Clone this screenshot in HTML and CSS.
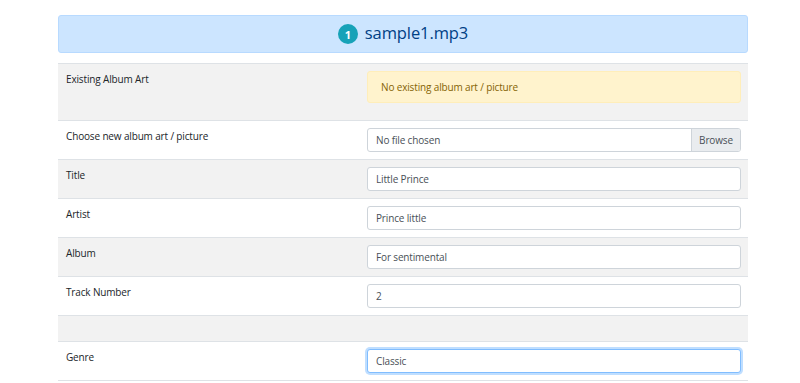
FILE: index.html
```html
<!DOCTYPE html>
<html lang="en">

<head>
    <meta charset="UTF-8">
    <meta name="viewport" content="width=device-width, initial-scale=1.0">
    <title>Edit Tags</title>
    <link rel="stylesheet" href="styles.css">
</head>

<body>
    <div class="container">
        <div class="file-header">
            <span class="badge">1</span>
            <span class="file-name">sample1.mp3</span>
        </div>

        <div class="tag-table">
            <div class="tag-row">
                <div class="tag-label">Existing Album Art</div>
                <div class="tag-field">
                    <div class="alert-warning">No existing album art / picture</div>
                </div>
            </div>
            <div class="tag-row">
                <div class="tag-label">Choose new album art / picture</div>
                <div class="tag-field">
                    <div class="file-input">
                        <span class="file-text">No file chosen</span>
                        <span class="file-browse">Browse</span>
                    </div>
                </div>
            </div>
            <div class="tag-row">
                <div class="tag-label">Title</div>
                <div class="tag-field"><input type="text" value="Little Prince"></div>
            </div>
            <div class="tag-row">
                <div class="tag-label">Artist</div>
                <div class="tag-field"><input type="text" value="Prince little"></div>
            </div>
            <div class="tag-row">
                <div class="tag-label">Album</div>
                <div class="tag-field"><input type="text" value="For sentimental"></div>
            </div>
            <div class="tag-row">
                <div class="tag-label">Track Number</div>
                <div class="tag-field"><input type="text" value="2"></div>
            </div>
            <div class="tag-row empty-row">
                <div class="tag-label"></div>
                <div class="tag-field"></div>
            </div>
            <div class="tag-row">
                <div class="tag-label">Genre</div>
                <div class="tag-field"><input type="text" class="focused" value="Classic"></div>
            </div>
        </div>
    </div>
</body>

</html>
```

FILE: styles.css
```css
body {
    margin: 0;
    background-color: white;
    font-family: "Segoe UI", "Open Sans", sans-serif;
    color: #212529;
}

.container {
    width: 690px;
    margin-left: 58px;
    padding-top: 15px;
}

.file-header {
    height: 36px;
    display: flex;
    align-items: center;
    justify-content: center;
    gap: 7px;
    background-color: #cce5ff;
    border: 1px solid #b8daff;
    border-radius: 3px;
    color: #004085;
    margin-bottom: 10px;
}

.badge {
    width: 20px;
    height: 20px;
    border-radius: 50%;
    background-color: #17a2b8;
    color: white;
    font-size: 11px;
    font-weight: 700;
    display: flex;
    align-items: center;
    justify-content: center;
}

.file-name {
    font-size: 16.5px;
    letter-spacing: -0.1px;
    line-height: 1;
    padding-bottom: 2px;
}

.tag-row {
    display: grid;
    grid-template-columns: 301px 1fr;
    border-top: 1px solid #dee2e6;
    font-size: 10px;
    letter-spacing: -0.15px;
}

.tag-row:nth-child(odd) {
    background-color: #f2f2f2;
}

.tag-row:last-child {
    border-bottom: 1px solid #dee2e6;
}

.tag-label {
    padding: 7px 8px;
    line-height: 16px;
}

.tag-field {
    padding: 7px 7px 7px 8px;
}

.empty-row {
    height: 25px;
}

.alert-warning {
    height: 32px;
    display: flex;
    align-items: center;
    padding: 0 13px;
    background-color: #fff3cd;
    border: 1px solid #ffeeba;
    border-radius: 3px;
    color: #856404;
    margin-bottom: 10px;
    box-sizing: border-box;
}

.file-input {
    display: flex;
    height: 24px;
    border: 1px solid #ced4da;
    border-radius: 3px;
    background-color: white;
    box-sizing: border-box;
    color: #495057;
    overflow: hidden;
}

.file-text {
    flex: 1;
    padding-left: 8px;
    display: flex;
    align-items: center;
}

.file-browse {
    width: 48px;
    background-color: #e9ecef;
    border-left: 1px solid #ced4da;
    display: flex;
    align-items: center;
    justify-content: center;
}

input[type="text"] {
    display: block;
    width: 100%;
    height: 24px;
    box-sizing: border-box;
    padding: 0 8px;
    border: 1px solid #ced4da;
    border-radius: 3px;
    font-family: "Segoe UI", "Open Sans", sans-serif;
    font-size: 10px;
    letter-spacing: -0.15px;
    color: #495057;
    outline: none;
}

input.focused {
    border-color: #80bdff;
    box-shadow: 0 0 0 2px rgba(0, 123, 255, 0.25);
}
```
